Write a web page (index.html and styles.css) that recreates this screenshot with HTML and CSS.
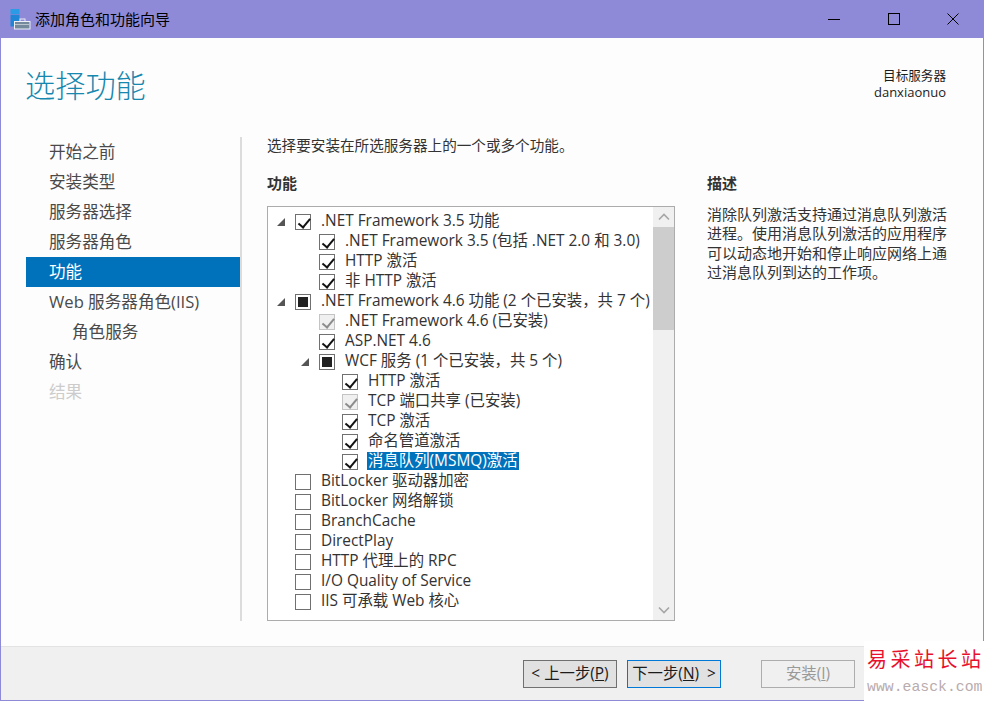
FILE: index.html
```html
<!DOCTYPE html>
<html lang="zh-CN">
<head>
<meta charset="utf-8">
<title>添加角色和功能向导</title>
<link rel="stylesheet" href="styles.css">
</head>
<body>
<div class="window">
  <header class="titlebar">
    <svg class="app-icon" width="21" height="21" viewBox="0 0 21 21">
      <rect x="0.5" y="0" width="9" height="5" fill="#2b9be6"/>
      <rect x="0.5" y="5.7" width="9" height="11.8" fill="#1f86d6"/>
      <rect x="10" y="10" width="5" height="3" fill="none" stroke="#e8e8f4" stroke-width="1"/>
      <rect x="4.5" y="12.5" width="15.5" height="7.5" fill="#75899c" stroke="#eef0f6" stroke-width="1"/>
      <rect x="5" y="15" width="14.5" height="1" fill="#b9c4ce"/>
    </svg>
    <span class="title-text">添加角色和功能向导</span>
    <div class="win-controls">
      <svg width="14" height="14" viewBox="0 0 14 14"><path d="M1 7.5h12" stroke="#000" stroke-width="1"/></svg>
      <svg width="14" height="14" viewBox="0 0 14 14"><rect x="1.5" y="1.5" width="11" height="11" fill="none" stroke="#000" stroke-width="1"/></svg>
      <svg width="14" height="14" viewBox="0 0 14 14"><path d="M1.5 1.5l11 11M12.5 1.5l-11 11" stroke="#000" stroke-width="1"/></svg>
    </div>
  </header>

  <section class="page-head">
    <h1 class="page-title">选择功能</h1>
    <div class="target">
      <div>目标服务器</div>
      <div class="target-name">danxiaonuo</div>
    </div>
  </section>

  <main class="main">
    <nav class="steps">
      <div class="step">开始之前</div>
      <div class="step">安装类型</div>
      <div class="step">服务器选择</div>
      <div class="step">服务器角色</div>
      <div class="step active">功能</div>
      <div class="step">Web 服务器角色(IIS)</div>
      <div class="step sub">角色服务</div>
      <div class="step">确认</div>
      <div class="step disabled">结果</div>
    </nav>
    <div class="content">
      <p class="intro">选择要安装在所选服务器上的一个或多个功能。</p>
      <div class="columns">
        <div class="features">
          <h2 class="col-head">功能</h2>
          <div class="listbox">
            <div class="rows">
              <div class="row l0"><i class="twist"></i><i class="cb on"></i><span>.NET Framework 3.5 功能</span></div>
              <div class="row l1"><i class="twist none"></i><i class="cb on"></i><span>.NET Framework 3.5 (包括 .NET 2.0 和 3.0)</span></div>
              <div class="row l1"><i class="twist none"></i><i class="cb on"></i><span>HTTP 激活</span></div>
              <div class="row l1"><i class="twist none"></i><i class="cb on"></i><span>非 HTTP 激活</span></div>
              <div class="row l0"><i class="twist"></i><i class="cb mixed"></i><span>.NET Framework 4.6 功能 (2 个已安装，共 7 个)</span></div>
              <div class="row l1"><i class="twist none"></i><i class="cb grey"></i><span>.NET Framework 4.6 (已安装)</span></div>
              <div class="row l1"><i class="twist none"></i><i class="cb on"></i><span>ASP.NET 4.6</span></div>
              <div class="row l1"><i class="twist"></i><i class="cb mixed"></i><span>WCF 服务 (1 个已安装，共 5 个)</span></div>
              <div class="row l2"><i class="twist none"></i><i class="cb on"></i><span>HTTP 激活</span></div>
              <div class="row l2"><i class="twist none"></i><i class="cb grey"></i><span>TCP 端口共享 (已安装)</span></div>
              <div class="row l2"><i class="twist none"></i><i class="cb on"></i><span>TCP 激活</span></div>
              <div class="row l2"><i class="twist none"></i><i class="cb on"></i><span>命名管道激活</span></div>
              <div class="row l2"><i class="twist none"></i><i class="cb on"></i><span class="sel">消息队列(MSMQ)激活</span></div>
              <div class="row l0"><i class="twist none"></i><i class="cb"></i><span>BitLocker 驱动器加密</span></div>
              <div class="row l0"><i class="twist none"></i><i class="cb"></i><span>BitLocker 网络解锁</span></div>
              <div class="row l0"><i class="twist none"></i><i class="cb"></i><span>BranchCache</span></div>
              <div class="row l0"><i class="twist none"></i><i class="cb"></i><span>DirectPlay</span></div>
              <div class="row l0"><i class="twist none"></i><i class="cb"></i><span>HTTP 代理上的 RPC</span></div>
              <div class="row l0"><i class="twist none"></i><i class="cb"></i><span>I/O Quality of Service</span></div>
              <div class="row l0"><i class="twist none"></i><i class="cb"></i><span>IIS 可承载 Web 核心</span></div>
            </div>
            <div class="scrollbar">
              <div class="sb-btn"><svg width="12" height="8" viewBox="0 0 12 8"><path d="M1 6.5l5-5 5 5" fill="none" stroke="#a6a6a6" stroke-width="1.6"/></svg></div>
              <div class="sb-track"><div class="sb-thumb"></div></div>
              <div class="sb-btn"><svg width="12" height="8" viewBox="0 0 12 8"><path d="M1 1.5l5 5 5-5" fill="none" stroke="#a6a6a6" stroke-width="1.6"/></svg></div>
            </div>
          </div>
        </div>
        <aside class="desc">
          <h2 class="col-head">描述</h2>
          <p class="desc-text">消除队列激活支持通过消息队列激活进程。使用消息队列激活的应用程序可以动态地开始和停止响应网络上通过消息队列到达的工作项。</p>
        </aside>
      </div>
    </div>
  </main>

  <footer class="footer">
    <button class="btn">&lt; 上一步(<u>P</u>)</button>
    <button class="btn primary">下一步(<u>N</u>) &nbsp;&gt;</button>
    <button class="btn off">安装(<u>I</u>)</button>
  </footer>
</div>
<div class="watermark">
  <div class="wm-cn">易采站长站</div>
  <div class="wm-en">www.easck.com</div>
</div>
</body>
</html>
```
FILE: styles.css
```css
* { box-sizing: border-box; }
html, body { margin: 0; padding: 0; }
body {
  width: 984px;
  height: 701px;
  overflow: hidden;
  position: relative;
  font-family: "Open Sans", "Noto Sans CJK SC", sans-serif;
  font-size: 15px;
  color: #1c1c1c;
  background: #fdfdfd;
}
.window {
  width: 984px;
  height: 701px;
  display: flex;
  flex-direction: column;
  border: 1px solid #8f8ad8;
  border-top: 0;
  background: #fdfdfd;
}
.titlebar {
  height: 38px;
  flex: none;
  background: #8f8ad8;
  display: flex;
  align-items: center;
  padding-left: 9px;
  color: #000;
}
.app-icon { margin-right: 4px; }
.title-text { font-size: 15px; line-height: 38px; }
.win-controls {
  margin-left: auto;
  display: flex;
  gap: 45.5px;
  padding-right: 23px;
}
.page-head {
  height: 99px;
  flex: none;
  display: flex;
  justify-content: space-between;
  padding: 28px 37px 0 24px;
}
.page-title {
  margin: 0;
  font-size: 30.2px;
  line-height: 40px;
  font-weight: 300;
  color: #1687ae;
}
.target {
  margin-top: 1px;
  text-align: right;
  font-size: 12.6px;
  line-height: 17px;
  color: #1c1c1c;
}
.target-name { font-size: 13px; }
.main {
  flex: 1;
  display: flex;
  min-height: 0;
  padding-left: 25px;
}
.steps {
  width: 216px;
  height: 484px;
  flex: none;
  border-right: 2px solid #dcdcdc;
  margin-right: 25px;
}
.step {
  height: 30px;
  width: 214px;
  line-height: 30px;
  padding-left: 23px;
  font-size: 16.6px;
  color: #4a4a4a;
}
.step.sub { padding-left: 46px; }
.step.active { background: #0072bc; color: #fff; }
.step.disabled { color: #ccc; }
.content { flex: 1; min-width: 0; }
.intro {
  margin: 0;
  font-size: 14.6px;
  line-height: 16px;
  color: #333;
}
.columns {
  display: flex;
  margin-top: 21px;
}
.features { width: 408px; flex: none; }
.col-head {
  margin: 0;
  font-size: 15px;
  line-height: 18px;
  font-weight: 700;
  color: #333;
}
.listbox {
  margin-top: 14px;
  height: 415px;
  border: 1px solid #acacac;
  background: #fff;
  display: flex;
}
.rows {
  flex: 1;
  min-width: 0;
  padding-top: 5px;
  overflow: hidden;
  font-size: 15.4px;
}
.row {
  height: 20px;
  display: flex;
  align-items: center;
  white-space: nowrap;
  color: #333;
}
.row.l0 { padding-left: 5px; }
.row.l1 { padding-left: 29px; }
.row.l2 { padding-left: 52px; }
.row span { margin-left: 10px; margin-bottom: 2px; height: 18px; line-height: 18px; }
.row span.sel { margin-left: 9px; padding: 0 1px; background: #0072bc; color: #fff; }
.twist {
  width: 22px;
  height: 16px;
  flex: none;
  position: relative;
}
.twist::before {
  content: "";
  position: absolute;
  left: 4px;
  top: 4px;
  width: 0;
  height: 0;
  border-style: solid;
  border-width: 0 0 8px 8px;
  border-color: transparent transparent #555 transparent;
}
.twist.none::before { display: none; }
.cb {
  width: 16px;
  height: 16px;
  flex: none;
  border: 1.5px solid #707070;
  background: #fff;
  position: relative;
}
.cb.on::after, .cb.grey::after {
  content: "";
  position: absolute;
  left: 4.5px;
  top: 1px;
  width: 5px;
  height: 9.5px;
  border: solid #111;
  border-width: 0 2.5px 2.5px 0;
  transform: rotate(40deg);
}
.cb.grey { border-color: #c4c4c4; background: #f0f0f0; }
.cb.grey::after { border-color: #8c8c8c; }
.cb.mixed::after {
  content: "";
  position: absolute;
  left: 1.5px;
  top: 1.5px;
  width: 10px;
  height: 10px;
  background: #222;
}
.scrollbar {
  width: 21px;
  flex: none;
  background: #f0f0f0;
  display: flex;
  flex-direction: column;
}
.sb-btn {
  height: 20px;
  flex: none;
  display: flex;
  align-items: center;
  justify-content: center;
}
.sb-track { flex: 1; }
.sb-thumb { height: 103px; background: #cdcdcd; }
.desc { margin-left: 32px; width: 243px; }
.desc-text {
  margin: 13px 0 0;
  font-size: 15px;
  line-height: 19.4px;
  color: #333;
}
.footer {
  height: 54px;
  flex: none;
  background: #f0f0f0;
  border-top: 1px solid #e3e3e3;
  display: flex;
  align-items: flex-start;
  padding: 13px 0 0 522px;
}
.btn {
  width: 94px;
  height: 28px;
  padding: 0 0 3px;
  border: 1px solid #707070;
  background: #e1e1e1;
  color: #1c1c1c;
  font: 15.4px "Open Sans", "Noto Sans CJK SC", sans-serif;
  margin-right: 10px;
}
.btn.primary { border-color: #0078d7; margin-right: 40px; }
.btn.off { background: #f0f0f0; border-color: #adadad; color: #999; }
.watermark {
  position: absolute;
  right: 0;
  bottom: 0;
  width: 120px;
  height: 60px;
  background: #fff;
  padding-left: 3px;
}
.wm-cn {
  font-family: "Noto Sans CJK SC", sans-serif;
  font-size: 20px;
  line-height: 36px;
  letter-spacing: 3.5px;
  color: #e8112d;
  white-space: nowrap;
}
.wm-en {
  font-family: "Liberation Mono", monospace;
  font-size: 14.8px;
  line-height: 20px;
  color: #b8acae;
  white-space: nowrap;
}
```
